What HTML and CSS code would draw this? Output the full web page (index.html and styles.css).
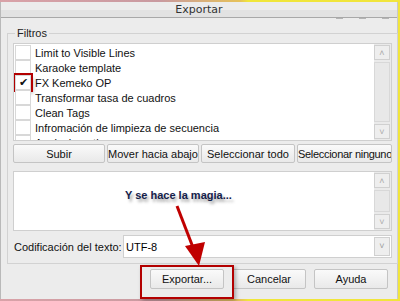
FILE: index.html
```html
<!DOCTYPE html>
<html lang="es">
<head>
  <meta charset="UTF-8">
  <title>Exportar</title>
  <link rel="stylesheet" href="styles.css">
</head>
<body>
  <div class="ventana">
    <div class="titulo">
      Exportar
      <span class="marcas"><i></i><i></i><i></i></span>
    </div>

    <fieldset class="grupo">
      <legend>Filtros</legend>
      <div class="lista">
        <div class="items">
          <div class="item"><span class="check"></span>Limit to Visible Lines</div>
          <div class="item"><span class="check"></span>Karaoke template</div>
          <div class="item"><span class="check marcado">&#10004;</span>FX Kemeko OP</div>
          <div class="item"><span class="check"></span>Transformar tasa de cuadros</div>
          <div class="item"><span class="check"></span>Clean Tags</div>
          <div class="item"><span class="check"></span>Infromación de limpieza de secuencia</div>
          <div class="item"><span class="check"></span>Aegisub motion</div>
        </div>
        <div class="scroll">
          <span class="flecha">&#708;</span>
          <span class="pista"></span>
          <span class="flecha">&#709;</span>
        </div>
      </div>

      <div class="botones">
        <button class="boton">Subir</button>
        <button class="boton">Mover hacia abajo</button>
        <button class="boton">Seleccionar todo</button>
        <button class="boton estrecho">Seleccionar ninguno</button>
      </div>

      <div class="texto">
        <div class="area">
          <span class="magia">Y se hace la magia...</span>
        </div>
        <div class="scroll">
          <span class="flecha">&#708;</span>
          <span class="pista"></span>
          <span class="flecha">&#709;</span>
        </div>
      </div>

      <div class="codificacion">
        <label>Codificación del texto:</label>
        <div class="combo">
          <span class="valor">UTF-8</span>
          <span class="flecha">&#709;</span>
        </div>
      </div>
    </fieldset>

    <div class="acciones">
      <button class="boton grande">Exportar...</button>
      <button class="boton grande">Cancelar</button>
      <button class="boton grande">Ayuda</button>
    </div>

    <!-- recuadro y flecha rojos que apuntan a Exportar -->
    <div class="resaltado"></div>
    <svg class="indicador" width="60" height="80" viewBox="0 0 60 80">
      <line x1="8" y1="8" x2="25" y2="52" stroke="#c00000" stroke-width="3"/>
      <polygon points="16,48 36,44 30,68" fill="#c00000"/>
    </svg>
  </div>
</body>
</html>
```

FILE: styles.css
```css
* {
  box-sizing: border-box;
}
body {
  margin: 0;
  width: 400px;
  height: 301px;
  overflow: hidden;
  font-family: "Liberation Sans", Arial, sans-serif;
  font-size: 11px;
  color: #000;
  background: linear-gradient(90deg, #d9a2a8 0%, #c99aa0 40%, #e6c25a 60%, #f0e63a 62%, #f1e53c 100%);
}
.ventana {
  position: relative;
  margin-top: 2px;
  width: 398px;
  height: 297px;
  background-color: #ececec;
  border-left: 1px solid #b9b9b9;
  border-right: 1px solid #c9c9c9;
}
.titulo {
  position: relative;
  height: 16px;
  line-height: 16px;
  text-align: center;
  font-family: "DejaVu Sans", sans-serif;
  font-size: 11px;
  color: #333;
  background: linear-gradient(#ececec 0%, #ececec 50%, #e2e2e2 51%, #e2e2e2 100%);
  border-bottom: 1px solid #a8a8a8;
}
.marcas {
  position: absolute;
  right: 8px;
  bottom: -4px;
  display: flex;
  gap: 16px;
}
.marcas i {
  width: 7px;
  height: 3px;
  border-top: 1px solid #b4b4b4;
}
.grupo {
  margin: 9px 3px 0 6px;
  padding: 4px 5px 3px 5px;
  border: 1px solid #d2d2d2;
  height: 237px;
}
.grupo legend {
  padding: 0 2px;
  margin-left: 2px;
  color: #222;
}
.lista, .texto {
  display: flex;
  background-color: #fff;
  border: 1px solid #cfcfcf;
}
.lista {
  height: 98px;
  overflow: hidden;
}
.items {
  flex: 1;
  padding-top: 1px;
}
.item {
  display: flex;
  align-items: center;
  height: 15px;
  white-space: nowrap;
  color: #111;
}
.check {
  width: 16px;
  height: 15px;
  margin: 0 4px 0 1px;
  border: 1px solid #d8d8d8;
  background-color: #fff;
  font-size: 11px;
  line-height: 13px;
  text-align: center;
}
.check.marcado {
  outline: 2px solid #b30000;
  box-shadow: 2px 3px 4px rgba(0, 0, 0, 0.3);
}
.scroll {
  width: 17px;
  display: flex;
  flex-direction: column;
  gap: 2px;
  padding: 1px 1px 1px 0;
  background-color: #eaeaea;
}
.scroll .flecha {
  height: 15px;
  border: 1px solid #d0d0d0;
  background-color: #eeeeee;
  color: #aaa;
  font-size: 9px;
  line-height: 15px;
  text-align: center;
}
.scroll .pista {
  flex: 1;
  border: 1px solid #d8d8d8;
  background-color: #e8e8e8;
}
.botones {
  display: grid;
  grid-template-columns: 92px 92px 94px 95px;
  gap: 2px;
  margin-top: 3px;
}
.boton {
  height: 19px;
  padding: 0;
  font-family: inherit;
  font-size: 11px;
  color: #111;
  white-space: nowrap;
  overflow: hidden;
  background: linear-gradient(#fafafa, #e9e9e9);
  border: 1px solid #c4c4c4;
  border-radius: 2px;
}
.boton.estrecho {
  letter-spacing: -0.3px;
}
.texto {
  height: 60px;
  margin-top: 8px;
}
.area {
  flex: 1;
  padding: 17px 0 0 111px;
}
.magia {
  font-weight: bold;
  font-size: 11px;
  color: #14214a;
  text-shadow: 2px 3px 3px rgba(0, 0, 0, 0.35);
}
.codificacion {
  display: flex;
  align-items: center;
  margin-top: 4px;
  gap: 6px;
}
.codificacion label {
  width: 104px;
  padding-left: 1px;
  color: #111;
  white-space: nowrap;
}
.combo {
  flex: 1;
  display: flex;
  height: 23px;
  align-items: center;
  background-color: #fff;
  border: 1px solid #cfcfcf;
}
.combo .valor {
  flex: 1;
  padding-left: 2px;
}
.combo .flecha {
  width: 16px;
  height: 19px;
  margin-right: 1px;
  border: 1px solid #d0d0d0;
  background-color: #eeeeee;
  color: #999;
  font-size: 9px;
  line-height: 17px;
  text-align: center;
}
.acciones {
  display: flex;
  justify-content: flex-end;
  gap: 8px;
  margin: 5px 9px 0 0;
}
.boton.grande {
  width: 74px;
  height: 20px;
}
.resaltado {
  position: absolute;
  left: 139px;
  top: 263px;
  width: 94px;
  height: 34px;
  border: 2px solid #b30000;
  box-shadow: 2px 2px 4px rgba(0, 0, 0, 0.3);
}
.indicador {
  position: absolute;
  left: 168px;
  top: 196px;
}
```
